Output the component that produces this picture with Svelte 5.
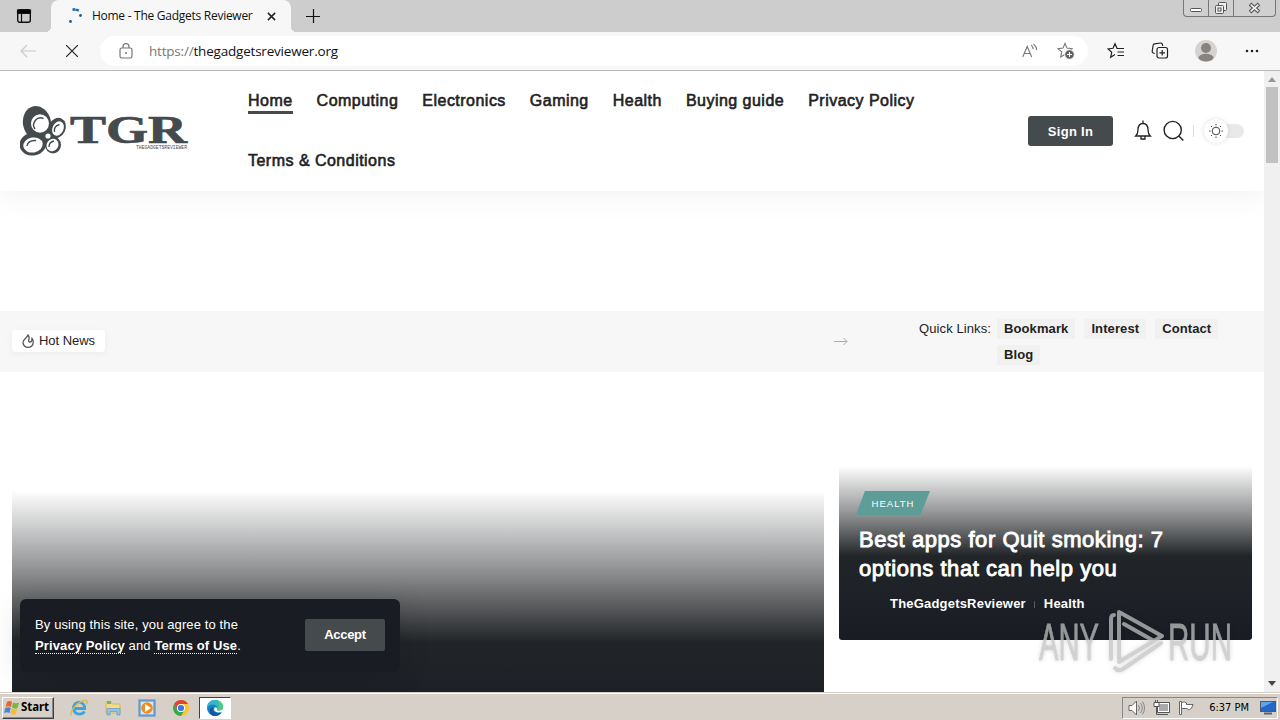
<script lang="ts">
	const menu = [
		'Home',
		'Computing',
		'Electronics',
		'Gaming',
		'Health',
		'Buying guide',
		'Privacy Policy',
		'Terms & Conditions'
	];
	const quickLinks = ['Bookmark', 'Interest', 'Contact', 'Blog'];

	let active = $state('Home');
</script>

<div class="desktop">
	<div class="tabs">
		<svg class="tab-menu" width="16" height="16" viewBox="0 0 16 16">
			<rect x="1.7" y="1.7" width="12.6" height="12.6" rx="2" fill="none" stroke="#111" stroke-width="1.4" />
			<path d="M1.5 2h13v3.5h-13zM5.5 5v9" stroke="#111" stroke-width="1.2" />
		</svg>
		<div class="tab">
			<svg width="16" height="16" viewBox="0 0 16 16">
				<path d="M4.500 1.800l3-.5 3.500 1.500" fill="none" stroke="#1769a8" stroke-width="2.400" stroke-dasharray="3 .6" />
				<circle cx="12.5" cy="7.5" r="1.4" fill="#1b5c90" />
				<circle cx="2.5" cy="13.5" r="1.4" fill="#1b5c90" />
			</svg>
			<span class="tab-title">Home - The Gadgets Reviewer</span>
			<svg class="tab-close" width="9" height="9" viewBox="0 0 10 10">
				<path d="M1 1l8 8M9 1l-8 8" stroke="#222" stroke-width="1.7" />
			</svg>
		</div>
		<svg class="new-tab" width="14" height="14" viewBox="0 0 14 14">
			<path d="M7.500 0v14M0 7.500h14" stroke="#111" stroke-width="1.2" />
		</svg>
		<div class="window-buttons">
			<span class="win">
				<svg width="24" height="16" viewBox="0 0 24 16">
					<rect x="6.5" y="8.5" width="11" height="3" rx="1" fill="#fff" stroke="#555" />
				</svg>
			</span>
			<span class="win">
				<svg width="24" height="16" viewBox="0 0 24 16" fill="#eee" stroke="#555">
					<rect x="9.5" y="2.5" width="8" height="8" rx="1" />
					<rect x="6.5" y="5.5" width="8" height="8" rx="1" />
					<rect x="9" y="8" width="3" height="3" />
				</svg>
			</span>
			<span class="win last">
				<svg width="41" height="16" viewBox="0 0 41 16">
					<path d="M16 4l9 8M25 4l-9 8" stroke="#555" stroke-width="3.8" />
					<path d="M16.7 4.6l7.6 6.8M24.3 4.6l-7.6 6.8" stroke="#eee" stroke-width="1.8" />
				</svg>
			</span>
		</div>
	</div>

	<div class="toolbar">
		<svg class="back" width="16" height="14" viewBox="0 0 16 14">
			<path d="M16 7H1M7 1L1 7l6 6" fill="none" stroke="#cacaca" stroke-width="1.2" />
		</svg>
		<svg class="stop" width="12" height="12" viewBox="0 0 12 12">
			<path d="M0 0l12 12M12 0L0 12" stroke="#222" stroke-width="1.2" />
		</svg>
		<div class="address">
			<svg class="lock" width="14" height="16" viewBox="0 0 14 16">
				<path d="M4 5V3.7a3 3 0 016 0V5" fill="none" stroke="#777" stroke-width="1.2" />
				<rect x="1" y="5" width="12" height="10" rx="1.8" fill="none" stroke="#777" stroke-width="1.2" />
				<circle cx="7" cy="10" r="1" fill="#777" />
			</svg>
			<span class="url"><span class="scheme">https://</span>thegadgetsreviewer.org</span>
			<svg class="read" width="16" height="16" viewBox="0 0 16 16" fill="none" stroke="#777" stroke-width="1.1">
				<path d="M.7 14L5.200 3.500l4.500 10.500M2.300 10.500h5.800M9.200 2.200q2 1.700 2 4M11.5.8q3.200 2.800 3.200 6.200" />
			</svg>
			<svg class="add-fav" width="18" height="18" viewBox="0 0 18 18">
				<path d="M8 1.5l2 4.6 5 .5-3.7 3.3 1 5L8 12.4l-4.3 2.5 1-5L1 6.6l5-.5z" fill="none" stroke="#777" stroke-width="1.1" />
				<circle cx="12.5" cy="12.5" r="4.8" fill="#616161" stroke="#fff" />
				<path d="M12.5 10v5M10 12.5h5" stroke="#fff" />
			</svg>
		</div>
		<svg class="favs" width="18" height="18" viewBox="0 0 18 18" fill="none" stroke="#222" stroke-width="1.2">
			<path d="M10.5 6.3H10L8 1.8 6 6.3l-5 .6 3.7 3.4-1 5L8 12.6M10.5 6.5H17M10.5 10H17M10.5 13.5H17" />
		</svg>
		<svg class="collections" width="18" height="18" viewBox="0 0 18 18" fill="none" stroke="#222" stroke-width="1.2">
			<path d="M3.7 11.5L1.8 10.8Q1 10.3 1.2 9.2L2.2 3q.2-1 1.4-1.2L9.5 1q1.3-.1 1.7 1l.6 2" />
			<rect x="6" y="5.5" width="10.5" height="10.5" rx="2" />
			<path d="M11.2 8v5.5M8.5 10.8H14" />
		</svg>
		<svg class="avatar" width="22" height="22" viewBox="0 0 22 22">
			<circle cx="11" cy="11" r="11" fill="#d5d2d0" />
			<circle cx="11" cy="8" r="5" fill="#868380" />
			<ellipse cx="11" cy="17.6" rx="7.5" ry="3.8" fill="#868380" />
		</svg>
		<svg class="more" width="14" height="4" viewBox="0 0 14 4" fill="#222">
			<circle cx="2" cy="2" r="1.3" /><circle cx="7" cy="2" r="1.3" /><circle cx="12" cy="2" r="1.3" />
		</svg>
	</div>

	<div class="viewport">
		<div class="page">
			<header>
				<svg class="logo" width="170" height="52" viewBox="0 0 170 52">
					<g fill="#454a4d">
						<ellipse cx="17" cy="18" rx="14" ry="17" transform="rotate(-12 17 18)" />
						<ellipse cx="13" cy="39" rx="13.5" ry="11.5" transform="rotate(-12 13 39)" />
						<ellipse cx="37" cy="23" rx="8.5" ry="10.5" transform="rotate(25 37 23)" />
						<ellipse cx="33" cy="40" rx="8" ry="8.5" />
						<circle cx="26" cy="30" r="9" />
					</g>
					<g fill="#fff">
						<ellipse cx="20" cy="18.500" rx="9" ry="9.300" />
						<ellipse cx="13" cy="40" rx="9.8" ry="7.5" transform="rotate(-10 13 40)" />
						<ellipse cx="38" cy="23.5" rx="5.5" ry="7.500" transform="rotate(25 38 23.5)" />
						<ellipse cx="32.500" cy="40" rx="5.8" ry="6.5" transform="rotate(35 32.500 40)" />
						<circle cx="28" cy="31" r="2.6" />
					</g>
					<g fill="none" stroke="#454a4d" stroke-width="1.4">
						<path d="M15 24a7 7 0 018.500-10.500M7 41q1-6 9-5.500M34.500 27q-1-6 5-7.500M29 42q0-5 5-6" />
					</g>
					<text class="logo-name" x="50" y="38" textLength="117" lengthAdjust="spacingAndGlyphs">TGR</text>
					<text class="logo-sub" x="116" y="43.5" textLength="51" lengthAdjust="spacingAndGlyphs">THEGADGETSREVIEWER</text>
				</svg>
				<nav>
					{#each menu as item}
						<button class="menu-item" onclick={() => (active = item)}>
							<span class:active={active === item}>{item}</span>
						</button>
					{/each}
				</nav>
				<button class="sign-in">Sign In</button>
				<svg class="bell" width="18" height="22" viewBox="0 0 18 22" fill="none" stroke="#222" stroke-width="1.3">
					<path d="M9 .5v2.500M1.700 16q2.300-2.200 2.300-6.200c0-4 1.700-6.300 5-6.300s5 2.300 5 6.300q0 4 2.300 6.200zM7 16.500v2.500h4v-2.500" />
				</svg>
				<svg class="search" width="22" height="22" viewBox="0 0 22 22" fill="none" stroke="#222" stroke-width="1.4">
					<circle cx="9.700" cy="10" r="8.6" /><path d="M15.800 16l4.500 4.500" />
				</svg>
				<span class="divider"></span>
				<span class="mode">
					<span class="knob">
						<svg width="14" height="14" viewBox="0 0 14 14" fill="none" stroke="#444">
							<circle cx="7" cy="7" r="3.8" />
							<path d="M7 0v1.5M7 12.5V14M0 7h1.5M12.5 7H14M2 2l1 1M11 11l1 1M12 2l-1 1M3 11l-1 1" />
						</svg>
					</span>
				</span>
			</header>

			<div class="news-bar">
				<span class="hot">
					<svg width="13" height="14" viewBox="0 0 13 14" fill="none" stroke="#555" stroke-width="1.3">
						<path d="M6 1C5 4 1 5 1 8.500a5 4.800 0 0010.200 0Q11.500 6 10 4.500q0 3.500-2 3.500Q6 8 7 5q.5-2-1-4z" />
					</svg>
					Hot News
				</span>
				<svg class="arrow" width="14" height="8" viewBox="0 0 14 8" fill="none" stroke="#aaa">
					<path d="M0 3.500h13M9.500 0L13 3.500 9.500 7" />
				</svg>
				<div class="quick">
					<span class="quick-label">Quick Links:</span>
					<div class="quick-list">
						{#each quickLinks as link}
							<span class="quick-link">{link}</span>
						{/each}
					</div>
				</div>
			</div>

			<main>
				<article class="lead"></article>
				<article class="side">
					<span class="category">HEALTH</span>
					<h3>Best apps for Quit smoking: 7<br />options that can help you</h3>
					<div class="meta"><b>TheGadgetsReviewer</b><i></i><b class="topic">Health</b></div>
				</article>
			</main>

			<div class="consent">
				<p>By using this site, you agree to the<br /><b>Privacy Policy</b> and <b>Terms of Use</b>.</p>
				<button>Accept</button>
			</div>

			<svg class="watermark" width="210" height="76" viewBox="0 0 210 76">
				<text x="4" y="53" textLength="60" lengthAdjust="spacingAndGlyphs">ANY</text>
				<text x="133" y="53" textLength="64" lengthAdjust="spacingAndGlyphs">RUN</text>
				<g fill="none" stroke="#c8c8c8" stroke-opacity=".72" stroke-width="4" stroke-linejoin="round" stroke-linecap="round">
					<path d="M76 52V12q0-4 3-4M84 52V5l43 24-43 26M89 17l30 17M80 61q3 4 8 1l38-26" />
				</g>
			</svg>
		</div>
		<div class="scrollbar">
			<span class="up"></span>
			<span class="thumb"></span>
			<span class="down"></span>
		</div>
	</div>

	<div class="taskbar">
		<div class="start">
			<svg width="16" height="16" viewBox="0 0 16 16">
				<path d="M3 2q3-2 5 0L7 7Q4 5.5 1.5 7z" fill="#e9652b" />
				<path d="M9 2.5q3 1.5 6 0L13.5 8q-3 1.3-5.5-.5z" fill="#76b843" />
				<path d="M1.3 8q3-1.5 5.4 0l-1.2 5Q3 11.7 0 13z" fill="#4387cf" />
				<path d="M7.8 8.5q3 1.5 5.5.3l-1.4 5.3q-2.8 1.3-5.4-.3z" fill="#f6bd2c" />
			</svg>
			<span>Start</span>
		</div>
		<div class="pinned">
			<svg width="18" height="18" viewBox="0 0 18 18">
				<path d="M14.5 12.5A6 6 0 119 3.2a5.8 5.8 0 015.7 6.3H5" fill="none" stroke="#3ca5de" stroke-width="2.8" />
				<path d="M1.5 16.5C-1 13 8 2 15 1.2q3 0 1.5 4" fill="none" stroke="#e7b740" stroke-width="1.4" />
			</svg>
			<svg width="18" height="18" viewBox="0 0 18 18">
				<path d="M2 3h5l1 2h8v9H2z" fill="#f3dc8c" stroke="#d3b863" />
				<path d="M3 2h4v3H3z" fill="#77b66b" />
				<path d="M3 16V9.500h13V16h-3v-3.500H6V16z" fill="#8cc6e8" stroke="#5d9cc8" stroke-width=".7" />
			</svg>
			<svg width="18" height="18" viewBox="0 0 18 18">
				<rect x="1" y="1" width="16" height="16" fill="#85b6df" stroke="#4b83b7" />
				<rect x="3" y="3" width="12" height="12" fill="#d8eafa" />
				<circle cx="9" cy="9" r="5.800" fill="#f18a21" />
				<path d="M7 5l6 4-6 4z" fill="#fff" />
			</svg>
			<svg width="18" height="18" viewBox="0 0 18 18">
				<circle cx="9" cy="9" r="8" fill="#fbc52b" />
				<path d="M2.1 5A8 8 0 0116 5H9a4 4 0 00-3.5 6z" fill="#df4436" />
				<path d="M2.1 5A8 8 0 009 17l3.5-6A4 4 0 015.5 11z" fill="#38a852" />
				<circle cx="9" cy="9" r="4" fill="#fff" />
				<circle cx="9" cy="9" r="3.1" fill="#3979e7" />
			</svg>
		</div>
		<div class="running">
			<svg width="18" height="18" viewBox="0 0 18 18">
				<circle cx="9" cy="9" r="8" fill="#1583c9" />
				<path d="M1 9C1 4 4.500 1 9 1c5 0 8 3.500 8 7 0 3-3 4.500-6 3.500 2-3-1-6-4.500-6Q3 5.500 1 9z" fill="#2fb9c9" />
				<path d="M11 1.300c4 1 6 3.700 6 6.700 0 3-3 4.500-6 3.500 1.500-3 3-6 0-10.200z" fill="#55cc72" />
				<path d="M7 8.500C6 13 11 15.500 15.500 13.500 13 17.500 7 18.500 4.500 14.500 3 11.500 4 8 7 8.500z" fill="#1256a0" />
				<path d="M8.500 8.500q-1.500 4.500 4 5 2.500 0 4.500-1.200V10q-2.500 2.500-6 1.500 1-1.500-.5-3z" fill="#fff" />
			</svg>
		</div>
		<div class="tray">
			<svg class="sound" width="18" height="16" viewBox="0 0 18 16">
				<path d="M1 5.500h3L8.500 1v14L4 10.500H1z" fill="#fff" stroke="#666" />
				<path d="M10.500 5q2 3 0 6M12.500 3q3.500 5 0 10M14.500 1.500q4 6.500 0 13" fill="none" stroke="#888" />
			</svg>
			<svg class="network" width="18" height="16" viewBox="0 0 18 16">
				<rect x="5.500" y="3.500" width="10" height="8" fill="#aaa" stroke="#fff" />
				<path d="M4.500 6V2.500h12v10h-12zM6 14.500h9" fill="none" stroke="#555" />
				<path d="M1 2.500h5v4H1z" fill="#fff" stroke="#555" />
				<path d="M3.500 6.500v8H6M2.500 0v3M4.500 0v3" fill="none" stroke="#555" />
			</svg>
			<svg class="flag" width="17" height="16" viewBox="0 0 17 16">
				<path d="M1.500 1.500h2v13h-2z" fill="#fff" stroke="#666" />
				<path d="M3.500 2.500q3-1.500 5 .5v1.500h6.500q-1 4-3.500 5.500-1.500-.3-2.500-1.500H3.500z" fill="#fff" stroke="#666" />
			</svg>
			<span class="clock">6:37 PM</span>
			<svg width="16" height="14" viewBox="0 0 16 14">
				<rect x=".5" y=".5" width="15" height="10" fill="#2367c9" stroke="#4c5a70" />
				<path d="M1 1h12L1 7z" fill="#5fa4ed" />
				<path d="M4 12.500h8" stroke="#58606c" stroke-width="2" />
			</svg>
		</div>
	</div>
</div>

<style>
	:global(body) {
		margin: 0;
		overflow: hidden;
	}

	.desktop {
		width: 1280px;
		height: 720px;
		display: grid;
		grid-template-rows: 32px 39px 621px 28px;
		font-family: 'Liberation Sans', Arial, sans-serif;
		color: #222;
	}

	svg {
		display: block;
		flex: none;
	}

	button {
		border: 0;
		padding: 0;
		font-family: inherit;
		cursor: pointer;
	}

	/* browser chrome */
	.tabs {
		display: flex;
		align-items: center;
		background: #cdcdcd;
		padding-left: 16px;
	}

	.tab {
		position: relative;
		box-sizing: border-box;
		width: 240px;
		height: 32px;
		margin-left: 19px;
		padding: 0 15px 0 17px;
		display: flex;
		align-items: center;
		background: #f7f7f7;
		border-radius: 8px 8px 0 0;
		font: 12px/16px 'Open Sans', 'Noto Sans', sans-serif;
		color: #111;
	}

	/* curved feet where the tab meets the toolbar */
	.tab::before,
	.tab::after {
		content: '';
		position: absolute;
		bottom: 0;
		width: 6px;
		height: 6px;
	}

	.tab::before {
		right: 100%;
		background: radial-gradient(circle at 0 0, transparent 6px, #f7f7f7 6.5px);
	}

	.tab::after {
		left: 100%;
		background: radial-gradient(circle at 100% 0, transparent 6px, #f7f7f7 6.5px);
	}

	.tab-title {
		margin-left: 8px;
		white-space: nowrap;
		letter-spacing: -0.27px;
	}

	.tab-close {
		margin-left: auto;
	}

	.new-tab {
		margin-left: 15px;
	}

	.window-buttons {
		display: flex;
		align-self: flex-start;
		margin-left: auto;
		margin-right: 4px;
		border: 1px solid #777;
		border-top: 0;
		border-radius: 0 0 4px 4px;
		background: #d0d0d0;
	}

	.win {
		border-right: 1px solid #777;
	}

	.last {
		border: 0;
	}

	.toolbar {
		box-sizing: border-box;
		display: flex;
		align-items: center;
		padding-left: 20px;
		background: #f7f7f7;
		border-bottom: 1px solid #b9b9b9;
	}

	.stop {
		margin-left: 30px;
	}

	.address {
		box-sizing: border-box;
		width: 988px;
		height: 30px;
		margin-left: 22px;
		padding: 0 13px 0 19px;
		display: flex;
		align-items: center;
		border-radius: 15px;
		background: #fff;
		font: 13.5px/18px 'Open Sans', 'Noto Sans', sans-serif;
	}

	.url {
		margin-left: 16px;
		color: #111;
		letter-spacing: -0.2px;
	}

	.scheme {
		color: #777;
	}

	.read {
		margin-left: auto;
	}

	.add-fav {
		margin-left: 19px;
	}

	.favs {
		margin-left: 19px;
	}

	.collections {
		margin-left: 26px;
	}

	.avatar {
		margin-left: 26px;
	}

	.more {
		margin-left: 28px;
	}

	/* site */
	.viewport {
		display: flex;
		min-height: 0;
	}

	.page {
		position: relative;
		width: 1264px;
		overflow: hidden;
		background: #fff;
	}

	header {
		box-sizing: border-box;
		height: 120px;
		padding-left: 20px;
		display: flex;
		align-items: center;
		background: #fff;
		box-shadow: 0 4px 30px #0000000f;
	}

	.logo-name {
		font: bold 39px 'Liberation Serif', serif;
		fill: #454a4d;
		stroke: #454a4d;
		stroke-width: 0.7px;
	}

	.logo-sub {
		font: 6px 'Liberation Mono', monospace;
		fill: #454a4d;
	}

	nav {
		width: 720px;
		margin-left: 58px;
		display: flex;
		flex-wrap: wrap;
		column-gap: 24px;
	}

	.menu-item {
		height: 60px;
		background: none;
		color: #222;
		font-size: 16px;
		line-height: 22px;
		letter-spacing: 0.48px;
		-webkit-text-stroke: 0.6px #222;
	}

	.menu-item span {
		display: block;
		padding-top: 1px;
		line-height: 21px;
		border-bottom: 3px solid transparent;
	}

	.menu-item .active {
		border-color: #454a4d;
	}

	.sign-in {
		width: 85px;
		height: 30px;
		margin-left: 60px;
		border-radius: 3px;
		background: #454a4d;
		color: #fff;
		font-size: 13px;
		font-weight: bold;
		letter-spacing: 0.3px;
	}

	.bell {
		margin-left: 21px;
	}

	.search {
		margin-left: 11px;
	}

	.divider {
		width: 1px;
		height: 12px;
		margin-left: 8px;
		background: #ddd;
	}

	.mode {
		width: 40px;
		height: 14px;
		margin-left: 10px;
		display: flex;
		align-items: center;
		border-radius: 7px;
		background: #e9e9e9;
	}

	.knob {
		width: 24px;
		height: 24px;
		display: grid;
		place-items: center;
		border-radius: 50%;
		background: #fff;
		box-shadow: 0 0 5px #0002;
	}

	.news-bar {
		box-sizing: border-box;
		height: 61px;
		margin-top: 120px;
		padding: 0 12px;
		display: flex;
		align-items: center;
		background: #f7f7f7;
		font-size: 13px;
	}

	.hot {
		box-sizing: border-box;
		width: 93px;
		height: 22px;
		margin-bottom: 2px;
		padding-left: 10px;
		display: flex;
		align-items: center;
		gap: 4px;
		border-radius: 4px;
		background: #fff;
		box-shadow: 0 2px 8px #0000000d;
		letter-spacing: -0.05px;
	}

	.arrow {
		margin-left: 729px;
	}

	.quick {
		margin-left: 71px;
		display: flex;
		line-height: 20px;
	}

	.quick-label {
		width: 78px;
		letter-spacing: 0.1px;
	}

	.quick-list {
		width: 240px;
		display: flex;
		flex-wrap: wrap;
		gap: 6px 9px;
	}

	.quick-link {
		padding: 0 7px;
		background: #f1f1f1;
		font-weight: bold;
		letter-spacing: 0.1px;
	}

	main {
		display: flex;
		padding: 0 12px;
		gap: 15px;
	}

	.lead {
		width: 812px;
		height: 340px;
		background: linear-gradient(transparent 118px, #22252880 198px, #222528 270px, #1a1d24 340px);
	}

	.side {
		box-sizing: border-box;
		width: 413px;
		height: 268px;
		padding: 119px 20px 0;
		border-radius: 3px;
		color: #fff;
		background: linear-gradient(transparent 94px, #22252880 142px, #222528 184px, #191c24 268px);
	}

	.category {
		width: 74px;
		height: 24px;
		margin-left: -3px;
		display: grid;
		place-items: center;
		background: #5d9d98;
		clip-path: polygon(12% 0, 100% 0, 87% 100%, 0 100%);
		font-size: 9.5px;
		letter-spacing: 1px;
	}

	h3 {
		margin: 10px 0 0;
		font-size: 22px;
		font-weight: normal;
		line-height: 29px;
		letter-spacing: 0.55px;
		-webkit-text-stroke: 0.9px #fff;
	}

	.meta {
		margin: 13px 0 0 31px;
		display: flex;
		align-items: center;
		font-size: 13px;
		line-height: 16px;
		letter-spacing: 0.2px;
	}

	.meta i {
		width: 1px;
		height: 7px;
		margin: 0 9px 0 8px;
		background: #555963;
	}

	.consent {
		position: absolute;
		left: 20px;
		bottom: 20px;
		box-sizing: border-box;
		width: 380px;
		height: 73px;
		padding: 0 15px 2px;
		display: flex;
		align-items: center;
		justify-content: space-between;
		border-radius: 6px;
		background: #191c22;
		box-shadow: 0 5px 30px #0002;
		color: #fff;
		font-size: 13px;
		line-height: 21px;
	}

	.consent p {
		margin: 0;
		letter-spacing: 0.12px;
	}

	.consent b {
		border-bottom: 1px dotted #fff;
	}

	.consent button {
		width: 80px;
		height: 32px;
		border-radius: 2px;
		background: #454a4d;
		color: #fff;
		font-size: 13px;
		font-weight: bold;
		letter-spacing: -0.3px;
	}

	.watermark {
		position: absolute;
		left: 1035px;
		top: 536px;
		filter: drop-shadow(0 0 2px #0003);
		pointer-events: none;
	}

	.watermark text {
		font: 52px 'Liberation Sans', sans-serif;
		fill: #c8c8c8;
		stroke: #c8c8c8;
		stroke-width: 0.8px;
		opacity: 0.72;
	}

	.scrollbar {
		width: 16px;
		display: flex;
		flex-direction: column;
		align-items: center;
		background: #f0f0f0;
	}

	.up {
		margin-top: 6px;
		border: 4px solid transparent;
		border-top: 0;
		border-bottom: 5px solid #999;
	}

	.thumb {
		width: 12px;
		height: 76px;
		margin-top: 5px;
		background: #c1c1c1;
	}

	.down {
		margin: auto 0 6px;
		border: 4px solid transparent;
		border-bottom: 0;
		border-top: 5px solid #444;
	}

	/* taskbar */
	.taskbar {
		box-sizing: border-box;
		display: flex;
		align-items: center;
		padding: 2px 2px 0;
		background: #d6d0c8;
		border-top: 1px solid #d6d0c8;
		box-shadow: inset 0 1px #fff;
		font-family: 'DejaVu Sans Condensed', 'Noto Sans', sans-serif;
		color: #000;
	}

	.start {
		box-sizing: border-box;
		width: 52px;
		height: 22px;
		padding-left: 1px;
		display: flex;
		align-items: center;
		gap: 1px;
		border: 1px solid;
		border-color: #fff #404040 #404040 #fff;
		box-shadow: inset -1px -1px #888;
		font: bold 11.5px/16px 'Noto Sans', sans-serif;
		letter-spacing: -0.1px;
	}

	.start span {
		margin-top: -2px;
	}

	.pinned {
		display: flex;
		gap: 16px;
		margin-left: 16px;
	}

	.running {
		box-sizing: border-box;
		width: 32px;
		height: 22px;
		margin-left: 9px;
		display: grid;
		place-items: center;
		background: #fff;
		border: 1px solid;
		border-color: #404040 #fff #fff #404040;
	}

	.tray {
		box-sizing: border-box;
		width: 156px;
		height: 22px;
		margin-left: auto;
		padding: 0 1px 0 5px;
		display: flex;
		align-items: center;
		border: 1px solid;
		border-color: #888 #fff #fff #888;
	}

	.network,
	.flag {
		margin-left: 7px;
	}

	.clock {
		margin-left: auto;
		margin-right: 11px;
		font-size: 11px;
	}
</style>
